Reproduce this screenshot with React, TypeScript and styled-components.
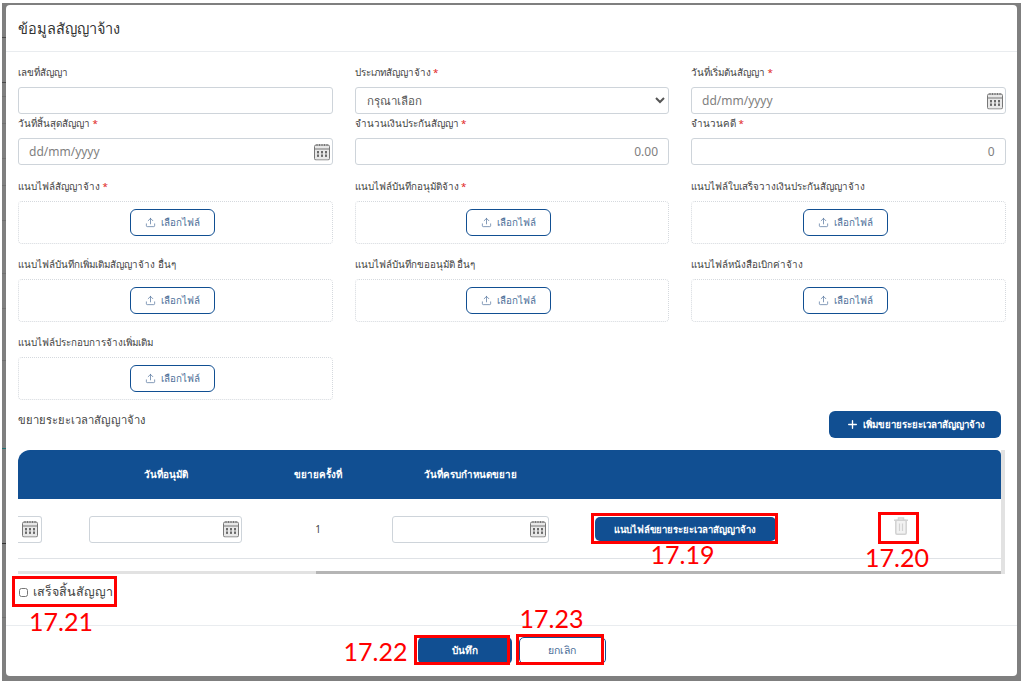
import styled, { createGlobalStyle } from 'styled-components'
import { Plus, Upload } from 'lucide-react'

const BLUE = '#114f92'
const FONT = '"Noto Sans", "Open Sans", "Liberation Sans", sans-serif'

const GlobalStyle = createGlobalStyle`
  html, body {
    margin: 0;
    background: #fff;
    font-family: ${FONT};
  }
  * { box-sizing: border-box; }
`

const Page = styled.div`
  width: 1022px;
  height: 683px;
  padding: 3px 1px 2px 2px;
  overflow: hidden;
`

const Backdrop = styled.div`
  position: relative;
  height: 100%;
  padding: 2px 4px 5px 4px;
  background: #7f7f7f;
`

// bits of the dimmed page that show beside the modal
const BackTick = styled.span<{ $y: number; $c: string }>`
  position: absolute;
  left: 0;
  top: ${(p) => p.$y}px;
  width: 4px;
  height: 1px;
  background: ${(p) => p.$c};
`

const Modal = styled.div`
  height: 100%;
  display: flex;
  flex-direction: column;
  background: #fff;
  border-radius: 4px;
`

const Header = styled.header`
  height: 47px;
  flex: none;
  display: flex;
  align-items: center;
  padding: 0 12px;
  border-bottom: 1px solid #e9ecef;
`

const Title = styled.h5`
  margin: 0;
  font-size: 14.5px;
  font-weight: 400;
  color: #333;
`

const Body = styled.div`
  flex: 1;
  padding: 13px 12px 0;
`

const FormGrid = styled.div<{ $rowGap: number; $top?: number }>`
  display: grid;
  grid-template-columns: repeat(3, 314.5px);
  column-gap: 22px;
  row-gap: ${(p) => p.$rowGap}px;
  margin-top: ${(p) => p.$top ?? 0}px;
`

const Field = styled.div`
  min-width: 0;
`

const Label = styled.label`
  display: block;
  height: 15px;
  margin-bottom: 7px;
  font-size: 9.8px;
  line-height: 15px;
  color: #444;
  white-space: nowrap;
`

const Req = styled.span`
  color: #e02020;
`

const ControlWrap = styled.div`
  position: relative;
`

const Input = styled.input<{ $right?: boolean }>`
  display: block;
  width: 100%;
  height: 27px;
  padding: 0 10px;
  border: 1px solid #ced4da;
  border-radius: 3px;
  background: #fff;
  font-family: ${FONT};
  font-size: 12px;
  color: #666;
  text-align: ${(p) => (p.$right ? 'right' : 'left')};
  &::placeholder { color: #808080; opacity: 1; }
`

const Select = styled.select`
  display: block;
  width: 100%;
  height: 27px;
  padding: 0 7px;
  border: 1px solid #ced4da;
  border-radius: 3px;
  background: #fff;
  font-family: ${FONT};
  font-size: 11.5px;
  color: #555;
`

const CalendarSlot = styled.span`
  position: absolute;
  top: 50%;
  right: 3px;
  transform: translateY(-50%);
  display: flex;
`

const FileBox = styled.div`
  height: 43px;
  display: flex;
  align-items: center;
  justify-content: center;
  padding-right: 6px;
  border: 1px dotted #d5d9de;
  border-radius: 4px;
`

const FileButton = styled.button`
  width: 85px;
  height: 27px;
  display: flex;
  align-items: center;
  justify-content: center;
  gap: 5px;
  padding: 0;
  background: #fff;
  border: 1px solid ${BLUE};
  border-radius: 6px;
  font-family: ${FONT};
  font-size: 9.8px;
  color: #4d6f99;
`

const SectionRow = styled.div`
  display: flex;
  justify-content: space-between;
  align-items: flex-start;
  margin-top: 11px;
  padding-right: 4px;
`

const SectionLabel = styled.span`
  font-size: 11.2px;
  line-height: 18px;
  color: #444;
`

const AddButton = styled.button`
  width: 172px;
  height: 27px;
  display: flex;
  align-items: center;
  justify-content: center;
  gap: 4px;
  padding: 0;
  border: 0;
  border-radius: 6px;
  background: ${BLUE};
  font-family: ${FONT};
  font-size: 9.7px;
  font-weight: 600;
  color: #fff;
`

const TableFrame = styled.div`
  margin-top: 12px;
  height: 124px;
  border-right: 4px solid #e2e2e2;
  display: flex;
  flex-direction: column;
`

const COLS = '48px 199px 106px 198px 232px 200px'

const HeadRow = styled.div`
  height: 49px;
  flex: none;
  display: grid;
  grid-template-columns: ${COLS};
  align-items: center;
  background: ${BLUE};
  border-radius: 12px 5px 0 0;
`

const HeadCell = styled.div`
  text-align: center;
  font-size: 9.8px;
  font-weight: 700;
  color: #fff;
  white-space: nowrap;
`

const BodyRow = styled.div`
  height: 60px;
  flex: none;
  display: grid;
  grid-template-columns: ${COLS};
  align-items: center;
  padding-top: 1px;
  border-bottom: 1px solid #dfe2e6;
`

const Cell = styled.div<{ $clip?: boolean }>`
  display: flex;
  justify-content: ${(p) => (p.$clip ? 'flex-end' : 'center')};
  align-items: center;
  padding-right: ${(p) => (p.$clip ? 24 : 0)}px;
  overflow: ${(p) => (p.$clip ? 'hidden' : 'visible')};
  font-size: 10px;
  color: #444;
`

const RowDate = styled(ControlWrap)<{ $w: number }>`
  flex: none;
  width: ${(p) => p.$w}px;
`

const PeekDate = styled(ControlWrap)`
  width: 24px;
  height: 27px;
  flex: none;
  border: 1px solid #ced4da;
  border-left: 0;
  border-radius: 0 3px 3px 0;
`

const DocButton = styled.button`
  width: 181px;
  height: 24px;
  padding: 0;
  border: 0;
  border-radius: 5px;
  background: ${BLUE};
  font-family: ${FONT};
  font-size: 9.5px;
  font-weight: 600;
  color: #fff;
  white-space: nowrap;
`

const TrashIcon = styled.svg`
  display: block;
  width: 14px;
  height: 18px;
  margin-bottom: 6px;
  color: #d2d2d2;
`

const HScroll = styled.div`
  margin-top: auto;
  height: 3px;
  background: #e2e2e2;
  display: flex;
  justify-content: flex-end;
`

const HThumb = styled.div`
  width: 685px;
  background: #b5b5b5;
`

const CheckRow = styled.div`
  margin-top: 10px;
  height: 16px;
  display: flex;
`

const CheckLabel = styled.label`
  display: inline-flex;
  align-items: center;
  gap: 5px;
  font-size: 12.5px;
  line-height: 16px;
  color: #444;
`

const Check = styled.input`
  width: 9px;
  height: 9px;
  margin: 0 0 0 1px;
`

const Footer = styled.footer`
  height: 51px;
  flex: none;
  display: flex;
  align-items: flex-start;
  justify-content: center;
  gap: 7px;
  padding-top: 11px;
  border-top: 1px solid #e9ecef;
`

const SaveButton = styled.button`
  width: 94px;
  height: 27px;
  padding: 0;
  border: 0;
  border-radius: 5px;
  background: ${BLUE};
  font-family: ${FONT};
  font-size: 10px;
  font-weight: 600;
  color: #fff;
`

const CancelButton = styled.button`
  width: 87px;
  height: 27px;
  padding: 0;
  border: 1px solid ${BLUE};
  border-radius: 5px;
  background: #fff;
  font-family: ${FONT};
  font-size: 10.5px;
  color: #4d6f99;
`

const Marked = styled.span`
  position: relative;
  display: inline-flex;
`

// red annotation rectangle laid over the screenshot
const MarkBox = styled.span<{ $t: number; $r: number; $b: number; $l: number }>`
  position: absolute;
  top: ${(p) => p.$t}px;
  right: ${(p) => p.$r}px;
  bottom: ${(p) => p.$b}px;
  left: ${(p) => p.$l}px;
  border: 3px solid #f00;
  pointer-events: none;
`

const MarkTag = styled.span<{ $x: number; $y: number }>`
  position: absolute;
  left: ${(p) => p.$x}px;
  top: ${(p) => p.$y}px;
  font-family: Lato, "Liberation Sans", sans-serif;
  font-size: 25px;
  line-height: 28px;
  color: #f00;
  white-space: nowrap;
`

const Calendar = () => (
  <svg width="16" height="17" viewBox="0 0 16 17" fill="none">
    <rect x="0.5" y="1.5" width="15" height="15" rx="1.5" fill="#e8e8e8" stroke="#777" />
    <path d="M0.5 5.5h15" stroke="#777" />
    <path d="M3 0.5v2M5.5 0.5v2M8 0.5v2M10.5 0.5v2M13 0.5v2" stroke="#777" />
    {[3, 7, 11].map((x) =>
      [7.5, 11].map((y) => <rect key={`${x}-${y}`} x={x} y={y} width="2" height="2.4" fill="#6a6a6a" />)
    )}
  </svg>
)

const Trash = () => (
  <TrashIcon viewBox="0 0 14 18" fill="none" stroke="currentColor" strokeWidth="1.5">
    <path d="M0 3.2h14M4.5 3V1h5v2" />
    <rect x="1.8" y="3.2" width="10.4" height="14" rx="1.2" fill="#f2f2f2" />
    <path d="M5.5 6.5v7.5M8.5 6.5v7.5" strokeWidth="1.2" />
  </TrashIcon>
)

const DateInput = () => (
  <ControlWrap>
    <Input placeholder="dd/mm/yyyy" />
    <CalendarSlot><Calendar /></CalendarSlot>
  </ControlWrap>
)

const fileFields = [
  { label: 'แนบไฟล์สัญญาจ้าง', required: true },
  { label: 'แนบไฟล์บันทึกอนุมัติจ้าง', required: true },
  { label: 'แนบไฟล์ใบเสร็จวางเงินประกันสัญญาจ้าง' },
  { label: 'แนบไฟล์บันทึกเพิ่มเติมสัญญาจ้าง อื่นๆ' },
  { label: 'แนบไฟล์บันทึกขออนุมัติ อื่นๆ' },
  { label: 'แนบไฟล์หนังสือเบิกค่าจ้าง' },
  { label: 'แนบไฟล์ประกอบการจ้างเพิ่มเติม' },
]

const backTicks = [
  { y: 34, c: '#4a4a4a' },
  { y: 79, c: '#4a4a4a' },
  { y: 93, c: '#707070' },
  { y: 120, c: '#707070' },
  { y: 155, c: '#707070' },
  { y: 182, c: '#707070' },
  { y: 217, c: '#707070' },
  { y: 270, c: '#707070' },
  { y: 305, c: '#707070' },
  { y: 357, c: '#707070' },
  { y: 445, c: '#1f6e70' },
  { y: 540, c: '#333' },
  { y: 614, c: '#707070' },
]

function App() {
  return (
    <Page>
      <GlobalStyle />
      <Backdrop>
        {backTicks.map((t) => (
          <BackTick key={t.y} $y={t.y} $c={t.c} />
        ))}
        <Modal>
          <Header>
            <Title>ข้อมูลสัญญาจ้าง</Title>
          </Header>
          <Body>
            <FormGrid $rowGap={2}>
              <Field>
                <Label>เลขที่สัญญา</Label>
                <Input />
              </Field>
              <Field>
                <Label>ประเภทสัญญาจ้าง <Req>*</Req></Label>
                <Select defaultValue="">
                  <option value="">กรุณาเลือก</option>
                </Select>
              </Field>
              <Field>
                <Label>วันที่เริ่มต้นสัญญา <Req>*</Req></Label>
                <DateInput />
              </Field>
              <Field>
                <Label>วันที่สิ้นสุดสัญญา <Req>*</Req></Label>
                <DateInput />
              </Field>
              <Field>
                <Label>จำนวนเงินประกันสัญญา <Req>*</Req></Label>
                <Input $right placeholder="0.00" />
              </Field>
              <Field>
                <Label>จำนวนคดี <Req>*</Req></Label>
                <Input $right placeholder="0" />
              </Field>
            </FormGrid>
            <FormGrid $rowGap={13} $top={14}>
              {fileFields.map((f) => (
                <Field key={f.label}>
                  <Label>{f.label} {f.required && <Req>*</Req>}</Label>
                  <FileBox>
                    <FileButton>
                      <Upload size={11} strokeWidth={1.5} />
                      เลือกไฟล์
                    </FileButton>
                  </FileBox>
                </Field>
              ))}
            </FormGrid>
            <SectionRow>
              <SectionLabel>ขยายระยะเวลาสัญญาจ้าง</SectionLabel>
              <AddButton>
                <Plus size={13} strokeWidth={2.5} />
                เพิ่มขยายระยะเวลาสัญญาจ้าง
              </AddButton>
            </SectionRow>
            <TableFrame>
              <HeadRow>
                <HeadCell />
                <HeadCell>วันที่อนุมัติ</HeadCell>
                <HeadCell>ขยายครั้งที่</HeadCell>
                <HeadCell>วันที่ครบกำหนดขยาย</HeadCell>
                <HeadCell />
                <HeadCell />
              </HeadRow>
              <BodyRow>
                <Cell $clip>
                  <PeekDate>
                    <CalendarSlot><Calendar /></CalendarSlot>
                  </PeekDate>
                </Cell>
                <Cell>
                  <RowDate $w={153}>
                    <Input />
                    <CalendarSlot><Calendar /></CalendarSlot>
                  </RowDate>
                </Cell>
                <Cell>1</Cell>
                <Cell>
                  <RowDate $w={157}>
                    <Input />
                    <CalendarSlot><Calendar /></CalendarSlot>
                  </RowDate>
                </Cell>
                <Cell>
                  <Marked>
                    <DocButton>แนบไฟล์ขยายระยะเวลาสัญญาจ้าง</DocButton>
                    <MarkBox $t={-4} $r={-2} $b={-3} $l={-4} />
                    <MarkTag $x={56} $y={23}>17.19</MarkTag>
                  </Marked>
                </Cell>
                <Cell>
                  <Marked>
                    <Trash />
                    <MarkBox $t={-5} $r={-11} $b={-3} $l={-16} />
                    <MarkTag $x={-29} $y={26}>17.20</MarkTag>
                  </Marked>
                </Cell>
              </BodyRow>
              <HScroll><HThumb /></HScroll>
            </TableFrame>
            <CheckRow>
              <Marked>
                <CheckLabel>
                  <Check type="checkbox" />
                  เสร็จสิ้นสัญญา
                </CheckLabel>
                <MarkBox $t={-8} $r={-4} $b={-7} $l={-6} />
                <MarkTag $x={11} $y={23}>17.21</MarkTag>
              </Marked>
            </CheckRow>
          </Body>
          <Footer>
            <Marked>
              <SaveButton>บันทึก</SaveButton>
              <MarkBox $t={-2} $r={2} $b={-1} $l={-4} />
              <MarkTag $x={-74} $y={0}>17.22</MarkTag>
            </Marked>
            <Marked>
              <CancelButton>ยกเลิก</CancelButton>
              <MarkBox $t={-3} $r={2} $b={-1} $l={-3} />
              <MarkTag $x={1} $y={-33}>17.23</MarkTag>
            </Marked>
          </Footer>
        </Modal>
      </Backdrop>
    </Page>
  )
}

export default App
